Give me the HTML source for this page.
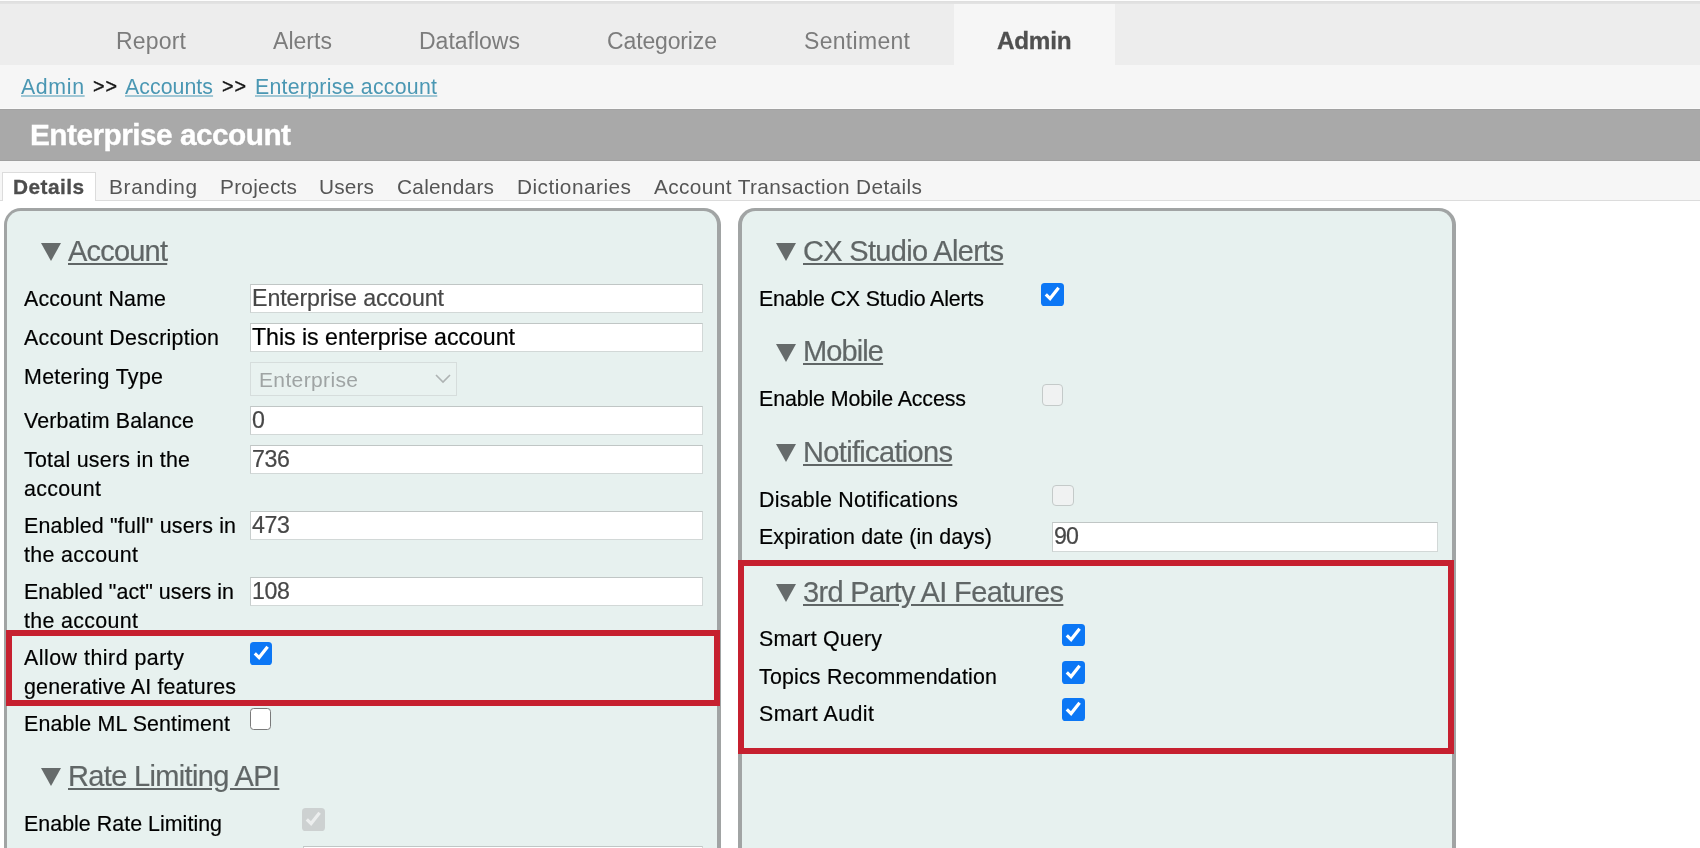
<!DOCTYPE html>
<html><head><meta charset="utf-8"><title>Enterprise account</title>
<style>
html,body{margin:0;padding:0;width:1700px;height:848px;overflow:hidden;}
*{font-family:"Liberation Sans",sans-serif;}
body{background:#fff;font-family:"Liberation Sans",sans-serif;}
#root{position:relative;width:1700px;height:848px;overflow:hidden;background:#fff;}
.t{will-change:transform;position:absolute;white-space:pre;font-family:"Liberation Sans",sans-serif;text-decoration-thickness:auto;}
.b{position:absolute;box-sizing:border-box;}
.inp{position:absolute;box-sizing:border-box;background:#fff;border:1px solid #d2d8d7;border-top-color:#c0c6c5;border-left-color:#c8cecd;}
.panel{position:absolute;box-sizing:border-box;background:#a1a4a4;border-radius:17px 17px 0 0;}
.pin{position:absolute;left:3.6px;right:3.6px;top:2.8px;bottom:0;background:#e7f1ef;border-radius:13.6px 13.6px 0 0;}
.red{position:absolute;box-sizing:border-box;border:6px solid #c6202f;}
.cb{position:absolute;box-sizing:border-box;width:22.5px;height:22.5px;border-radius:3.6px;}
.cb.on{background:#0c77f5;}
.cb.off{background:#fff;border:1.3px solid #7a7a7a;border-radius:3.6px;}
.cb.dis{background:#f0f2f2;border:1.4px solid #c4cac9;border-radius:4px;}
.cb.dison{background:#cdd1d1;}
.cb svg{position:absolute;left:0;top:0;}
.tri{position:absolute;width:0;height:0;border-left:10.2px solid transparent;border-right:10.2px solid transparent;border-top:18.8px solid #666b6b;}

</style></head>
<body>
<div id="root">
<!-- top nav -->
<div class="b" style="left:0;top:0;width:1700px;height:65px;background:#ededed;"></div>
<div class="b" style="left:0;top:0;width:1700px;height:1px;background:#fdfdfd;"></div>
<div class="b" style="left:0;top:1px;width:1700px;height:3px;background:linear-gradient(#dedede,#e4e4e4);"></div>
<div class="b" style="left:954px;top:4px;width:161px;height:61px;background:#f6f6f6;"></div>
<!-- breadcrumb bar -->
<div class="b" style="left:0;top:65px;width:1700px;height:44px;background:#f6f6f6;"></div>
<!-- title bar -->
<div class="b" style="left:0;top:108px;width:1700px;height:1px;background:#fafafa;"></div>
<div class="b" style="left:0;top:109px;width:1700px;height:52px;background:#a9a9a9;border-top:1px solid #a2a2a2;border-bottom:1px solid #a0a0a0;"></div>
<!-- tabs bar -->
<div class="b" style="left:0;top:161px;width:1700px;height:40px;background:#f6f6f6;border-bottom:1px solid #dcdcdc;"></div>
<div class="b" style="left:2px;top:172px;width:94px;height:29px;background:#fff;border:1px solid #dcdcdc;border-bottom:none;"></div>
<!-- panels -->
<div class="panel" style="left:4px;top:208.2px;width:716.7px;height:700px;"><div class="pin" style="left:3px;"></div></div>
<div class="panel" style="left:738.2px;top:208.2px;width:717.6px;height:700px;"><div class="pin"></div></div>
<!-- triangles -->
<div class="tri" style="left:41px;top:243.4px;"></div>
<div class="tri" style="left:41px;top:768.4px;"></div>
<div class="tri" style="left:776px;top:243.4px;"></div>
<div class="tri" style="left:776px;top:343.9px;"></div>
<div class="tri" style="left:776px;top:444.3px;"></div>
<div class="tri" style="left:776px;top:584.3px;"></div>
<!-- inputs left -->
<div class="inp" style="left:250px;top:284px;width:453px;height:29px;"></div>
<div class="inp" style="left:250px;top:323px;width:453px;height:29px;"></div>
<div class="inp" style="left:250px;top:362px;width:207px;height:34px;background:#e9f2f0;border-color:#d6dddc;"></div>
<svg class="b" style="left:434px;top:373px;" width="18" height="12" viewBox="0 0 18 12"><path d="M2 2 L9 9 L16 2" fill="none" stroke="#aeb3b3" stroke-width="1.6"/></svg>
<div class="inp" style="left:250px;top:406px;width:453px;height:29px;"></div>
<div class="inp" style="left:250px;top:445px;width:453px;height:29px;"></div>
<div class="inp" style="left:250px;top:511px;width:453px;height:29px;"></div>
<div class="inp" style="left:250px;top:577px;width:453px;height:29px;"></div>
<div class="inp" style="left:303px;top:846px;width:400px;height:29px;"></div>
<!-- input right -->
<div class="inp" style="left:1052px;top:522px;width:386px;height:29.6px;"></div>
<!-- red boxes -->
<div class="red" style="left:6px;top:630px;width:714px;height:76px;"></div>
<div class="red" style="left:738px;top:560px;width:716px;height:194px;"></div>
<!-- checkboxes -->
<div class="cb on" style="left:249.5px;top:642.1px;"><svg width="22.5" height="22.5" viewBox="0 0 22.5 22.5"><path d="M4.8 11.3 L9.1 15.6 L17.6 4.7" fill="none" stroke="#fff" stroke-width="3.2" stroke-linejoin="miter"/></svg></div>
<div class="cb off" style="left:249.9px;top:708.2px;width:21.6px;height:21.6px;"></div>
<div class="cb dison" style="left:302.4px;top:808.1px;"><svg width="22.5" height="22.5" viewBox="0 0 22.5 22.5"><path d="M4.8 11.3 L9.1 15.6 L17.6 4.7" fill="none" stroke="#eceeee" stroke-width="3.2"/></svg></div>
<div class="cb on" style="left:1041.2px;top:283.2px;"><svg width="22.5" height="22.5" viewBox="0 0 22.5 22.5"><path d="M4.8 11.3 L9.1 15.6 L17.6 4.7" fill="none" stroke="#fff" stroke-width="3.2"/></svg></div>
<div class="cb dis" style="left:1041.9px;top:384.2px;width:21.6px;height:21.6px;"></div>
<div class="cb dis" style="left:1052.4px;top:484.8px;width:21.7px;height:21.7px;"></div>
<div class="cb on" style="left:1062.2px;top:623.9px;"><svg width="22.5" height="22.5" viewBox="0 0 22.5 22.5"><path d="M4.8 11.3 L9.1 15.6 L17.6 4.7" fill="none" stroke="#fff" stroke-width="3.2"/></svg></div>
<div class="cb on" style="left:1062.2px;top:661px;"><svg width="22.5" height="22.5" viewBox="0 0 22.5 22.5"><path d="M4.8 11.3 L9.1 15.6 L17.6 4.7" fill="none" stroke="#fff" stroke-width="3.2"/></svg></div>
<div class="cb on" style="left:1062.2px;top:698.1px;"><svg width="22.5" height="22.5" viewBox="0 0 22.5 22.5"><path d="M4.8 11.3 L9.1 15.6 L17.6 4.7" fill="none" stroke="#fff" stroke-width="3.2"/></svg></div>

<span class="t" style="left:116px;top:28px;font-size:23px;line-height:26px;color:#7c7c7c;letter-spacing:0.191px;">Report</span>
<span class="t" style="left:273px;top:28px;font-size:23px;line-height:26px;color:#7c7c7c;letter-spacing:0.041px;">Alerts</span>
<span class="t" style="left:419px;top:28px;font-size:23px;line-height:26px;color:#7c7c7c;">Dataflows</span>
<span class="t" style="left:607px;top:28px;font-size:23px;line-height:26px;color:#7c7c7c;letter-spacing:-0.137px;">Categorize</span>
<span class="t" style="left:804px;top:28px;font-size:23px;line-height:26px;color:#7c7c7c;letter-spacing:0.305px;">Sentiment</span>
<span class="t" style="left:997px;top:27px;font-size:24.3px;line-height:27px;color:#505050;font-weight:700;letter-spacing:-0.273px;-webkit-text-stroke:0.3px #505050;">Admin</span>
<span class="t" style="left:21px;top:74px;font-size:21.3px;line-height:24px;color:#4a97b3;letter-spacing:0.656px;text-decoration:underline;text-decoration-thickness:1.4px;text-underline-offset:2.2px;transform:translateY(0.5px);">Admin</span>
<span class="t" style="left:93px;top:75px;font-size:19.8px;line-height:22px;color:#111;letter-spacing:0.891px;transform:translateY(0.3px);-webkit-text-stroke:0.35px #111;">&gt;&gt;</span>
<span class="t" style="left:125px;top:74px;font-size:21.3px;line-height:24px;color:#4a97b3;letter-spacing:0.056px;text-decoration:underline;text-decoration-thickness:1.4px;text-underline-offset:2.2px;transform:translateY(0.5px);">Accounts</span>
<span class="t" style="left:222px;top:75px;font-size:19.8px;line-height:22px;color:#111;letter-spacing:0.891px;transform:translateY(0.3px);-webkit-text-stroke:0.35px #111;">&gt;&gt;</span>
<span class="t" style="left:255px;top:74px;font-size:21.3px;line-height:24px;color:#4a97b3;letter-spacing:0.260px;text-decoration:underline;text-decoration-thickness:1.4px;text-underline-offset:2.2px;transform:translateY(0.5px);">Enterprise account</span>
<span class="t" style="left:30px;top:118px;font-size:29.8px;line-height:33px;color:#fff;font-weight:700;letter-spacing:-0.524px;-webkit-text-stroke:0.35px #fff;">Enterprise account</span>
<span class="t" style="left:13px;top:175px;font-size:20.8px;line-height:23px;color:#4d4d4d;font-weight:700;letter-spacing:0.466px;-webkit-text-stroke:0.3px #4d4d4d;">Details</span>
<span class="t" style="left:109px;top:175px;font-size:20.8px;line-height:23px;color:#555;letter-spacing:0.679px;">Branding</span>
<span class="t" style="left:220px;top:175px;font-size:20.8px;line-height:23px;color:#555;letter-spacing:0.268px;">Projects</span>
<span class="t" style="left:319px;top:175px;font-size:20.8px;line-height:23px;color:#555;letter-spacing:0.172px;">Users</span>
<span class="t" style="left:397px;top:175px;font-size:20.8px;line-height:23px;color:#555;letter-spacing:0.275px;">Calendars</span>
<span class="t" style="left:517px;top:175px;font-size:20.8px;line-height:23px;color:#555;letter-spacing:0.486px;">Dictionaries</span>
<span class="t" style="left:654px;top:175px;font-size:20.8px;line-height:23px;color:#555;letter-spacing:0.393px;">Account Transaction Details</span>
<span class="t" style="left:68px;top:235px;font-size:29px;line-height:32px;color:#606666;letter-spacing:-0.799px;text-decoration:underline;-webkit-text-stroke:0.2px #606666;">Account</span>
<span class="t" style="left:68px;top:760px;font-size:29px;line-height:32px;color:#606666;letter-spacing:-0.653px;text-decoration:underline;-webkit-text-stroke:0.2px #606666;">Rate Limiting API</span>
<span class="t" style="left:803px;top:235px;font-size:29px;line-height:32px;color:#606666;letter-spacing:-0.677px;text-decoration:underline;-webkit-text-stroke:0.2px #606666;">CX Studio Alerts</span>
<span class="t" style="left:803px;top:335px;font-size:29px;line-height:32px;color:#606666;letter-spacing:-0.887px;text-decoration:underline;-webkit-text-stroke:0.2px #606666;">Mobile</span>
<span class="t" style="left:803px;top:436px;font-size:29px;line-height:32px;color:#606666;letter-spacing:-0.664px;text-decoration:underline;-webkit-text-stroke:0.2px #606666;">Notifications</span>
<span class="t" style="left:803px;top:576px;font-size:29px;line-height:32px;color:#606666;letter-spacing:-0.651px;text-decoration:underline;-webkit-text-stroke:0.2px #606666;">3rd Party AI Features</span>
<span class="t" style="left:24px;top:287px;font-size:21.4px;line-height:24px;color:#000;letter-spacing:0.155px;-webkit-text-stroke:0.2px #000;">Account Name</span>
<span class="t" style="left:24px;top:326px;font-size:21.4px;line-height:24px;color:#000;letter-spacing:0.265px;-webkit-text-stroke:0.2px #000;">Account Description</span>
<span class="t" style="left:24px;top:365px;font-size:21.4px;line-height:24px;color:#000;letter-spacing:0.320px;-webkit-text-stroke:0.2px #000;">Metering Type</span>
<span class="t" style="left:24px;top:409px;font-size:21.4px;line-height:24px;color:#000;letter-spacing:0.155px;-webkit-text-stroke:0.2px #000;">Verbatim Balance</span>
<span class="t" style="left:24px;top:448px;font-size:21.4px;line-height:24px;color:#000;letter-spacing:0.253px;-webkit-text-stroke:0.2px #000;">Total users in the</span>
<span class="t" style="left:24px;top:477px;font-size:21.4px;line-height:24px;color:#000;letter-spacing:0.346px;-webkit-text-stroke:0.2px #000;">account</span>
<span class="t" style="left:24px;top:514px;font-size:21.4px;line-height:24px;color:#000;letter-spacing:0.190px;-webkit-text-stroke:0.2px #000;">Enabled "full" users in</span>
<span class="t" style="left:24px;top:543px;font-size:21.4px;line-height:24px;color:#000;letter-spacing:0.339px;-webkit-text-stroke:0.2px #000;">the account</span>
<span class="t" style="left:24px;top:580px;font-size:21.4px;line-height:24px;color:#000;letter-spacing:0.047px;-webkit-text-stroke:0.2px #000;">Enabled "act" users in</span>
<span class="t" style="left:24px;top:609px;font-size:21.4px;line-height:24px;color:#000;letter-spacing:0.339px;-webkit-text-stroke:0.2px #000;">the account</span>
<span class="t" style="left:24px;top:646px;font-size:21.4px;line-height:24px;color:#000;letter-spacing:0.489px;-webkit-text-stroke:0.2px #000;">Allow third party</span>
<span class="t" style="left:24px;top:675px;font-size:21.4px;line-height:24px;color:#000;letter-spacing:0.185px;-webkit-text-stroke:0.2px #000;">generative AI features</span>
<span class="t" style="left:24px;top:712px;font-size:21.4px;line-height:24px;color:#000;letter-spacing:0.126px;-webkit-text-stroke:0.2px #000;">Enable ML Sentiment</span>
<span class="t" style="left:24px;top:812px;font-size:21.4px;line-height:24px;color:#000;letter-spacing:0.032px;-webkit-text-stroke:0.2px #000;">Enable Rate Limiting</span>
<span class="t" style="left:759px;top:287px;font-size:21.4px;line-height:24px;color:#000;letter-spacing:-0.151px;-webkit-text-stroke:0.2px #000;">Enable CX Studio Alerts</span>
<span class="t" style="left:759px;top:387px;font-size:21.4px;line-height:24px;color:#000;letter-spacing:-0.120px;-webkit-text-stroke:0.2px #000;">Enable Mobile Access</span>
<span class="t" style="left:759px;top:488px;font-size:21.4px;line-height:24px;color:#000;letter-spacing:0.260px;-webkit-text-stroke:0.2px #000;">Disable Notifications</span>
<span class="t" style="left:759px;top:525px;font-size:21.4px;line-height:24px;color:#000;letter-spacing:0.097px;-webkit-text-stroke:0.2px #000;">Expiration date (in days)</span>
<span class="t" style="left:759px;top:627px;font-size:21.4px;line-height:24px;color:#000;letter-spacing:0.175px;-webkit-text-stroke:0.2px #000;">Smart Query</span>
<span class="t" style="left:759px;top:665px;font-size:21.4px;line-height:24px;color:#000;letter-spacing:0.188px;-webkit-text-stroke:0.2px #000;">Topics Recommendation</span>
<span class="t" style="left:759px;top:702px;font-size:21.4px;line-height:24px;color:#000;letter-spacing:0.442px;-webkit-text-stroke:0.2px #000;">Smart Audit</span>
<span class="t" style="left:252px;top:285px;font-size:23.2px;line-height:26px;color:#474747;letter-spacing:-0.079px;-webkit-text-stroke:0.2px #474747;">Enterprise account</span>
<span class="t" style="left:252px;top:324px;font-size:23.2px;line-height:26px;color:#000;letter-spacing:-0.048px;-webkit-text-stroke:0.2px #000;">This is enterprise account</span>
<span class="t" style="left:259px;top:368px;font-size:21px;line-height:23px;color:#9fa4a4;letter-spacing:0.365px;">Enterprise</span>
<span class="t" style="left:252px;top:407px;font-size:23.2px;line-height:26px;color:#474747;-webkit-text-stroke:0.2px #474747;">0</span>
<span class="t" style="left:252px;top:446px;font-size:23.2px;line-height:26px;color:#474747;letter-spacing:-0.344px;-webkit-text-stroke:0.2px #474747;">736</span>
<span class="t" style="left:252px;top:512px;font-size:23.2px;line-height:26px;color:#474747;letter-spacing:-0.344px;-webkit-text-stroke:0.2px #474747;">473</span>
<span class="t" style="left:252px;top:578px;font-size:23.2px;line-height:26px;color:#474747;letter-spacing:-0.344px;-webkit-text-stroke:0.2px #474747;">108</span>
<span class="t" style="left:1054px;top:523px;font-size:23.2px;line-height:26px;color:#474747;letter-spacing:-0.797px;-webkit-text-stroke:0.2px #474747;">90</span>
</div>
</body></html>
